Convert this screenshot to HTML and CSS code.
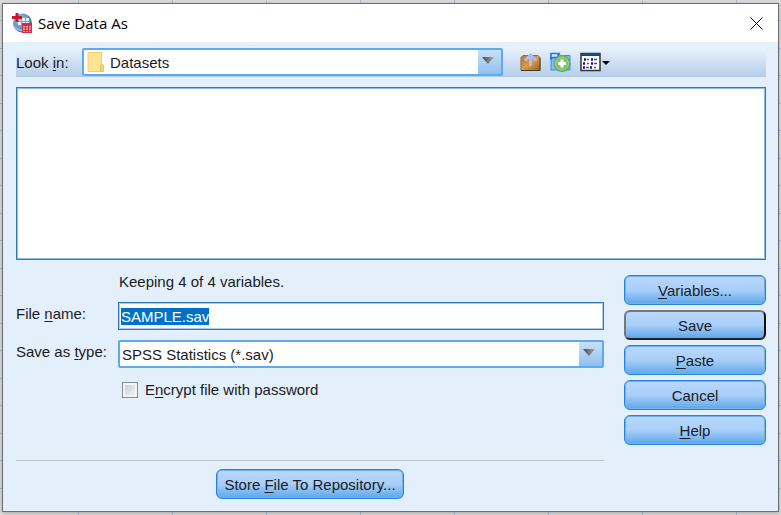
FILE: index.html
```html
<!DOCTYPE html>
<html lang="en">
<head>
<meta charset="utf-8">
<title>Save Data As</title>
<link rel="stylesheet" href="styles.css">
</head>
<body>
<main class="dialog">
  <header class="titlebar">
    <svg class="app-icon" width="20" height="20" viewBox="0 0 20 20" aria-hidden="true">
      <defs><radialGradient id="globe" cx=".4" cy=".35" r=".7"><stop offset="0" stop-color="#a9cdea"/><stop offset="1" stop-color="#2f6da9"/></radialGradient></defs>
      <circle cx="10.500" cy="10" r="9.500" fill="url(#globe)"/>
      <path d="M6 5h11v7H6z" fill="#e4eff9"/>
      <path d="M6 8.500h11M9.500 5v7M13.500 5v7" stroke="#7ba8d2"/>
      <path d="M2 13q4 5 9 4" stroke="#8fbce0" stroke-width="2" fill="none"/>
      <path d="M0 4.500h10M5 0v9" stroke="#d3122c" stroke-width="3"/>
      <path d="M10 10h10v10H10z" fill="#d52c42"/>
      <path d="M11 13h2v1.500h-2zM14 13h2v1.500h-2zM17 13h2v1.500h-2zM11 15.500h2V17h-2zM14 15.500h2V17h-2zM17 15.500h2V17h-2zM11 18h2v1h-2zM14 18h2v1h-2zM17 18h2v1h-2z" fill="#f0a9b3"/>
    </svg>
    <h1>Save Data As</h1>
    <button class="close" type="button" aria-label="Close">
      <svg width="13" height="13" viewBox="0 0 13 13"><path d="M.5.5l12 12M12.500.5l-12 12" stroke="#000"/></svg>
    </button>
  </header>
  <form class="content">
    <div class="toolbar">
      <label for="folder">Look <u>i</u>n:</label>
      <div class="combo folder-combo">
        <select id="folder"><option>Datasets</option></select>
        <svg class="folder" width="18" height="20" viewBox="0 0 18 20" aria-hidden="true"><path d="M1 .5h13.500v11.500l2 1v6.500H1z" fill="#ffe493" stroke="#f2cf66"/><path d="M13.500 19.500v-6l1.500-1.500 1.500 1.500v6z" fill="#f7d56d" stroke="#e9c45b"/></svg>
        <svg class="arrow" width="12" height="7" viewBox="0 0 12 7" aria-hidden="true"><path d="M0 0h12L6 7z" fill="url(#arrow)"/><defs><linearGradient id="arrow"><stop offset="0" stop-color="#444"/><stop offset="1" stop-color="#aaa"/></linearGradient></defs></svg>
      </div>
      <div class="tools">
        <button type="button" aria-label="Up one level">
          <svg width="21" height="20" viewBox="0 0 21 20"><defs><linearGradient id="box" x2="1" y2="1"><stop offset="0" stop-color="#b9762c"/><stop offset=".5" stop-color="#d99b4c"/><stop offset="1" stop-color="#9b5f20"/></linearGradient></defs><path d="M1 5.500l2-2h15l2 2v13H1z" fill="url(#box)" stroke="#8b6a45"/><path d="M1 18.500h19V6" stroke="#4b3c2b" fill="none"/><path d="M10.500 14V4M5 8.500l5.500-5.500L16 8.500" stroke="#a9bdf5" stroke-width="3" fill="none"/></svg>
        </button>
        <button type="button" aria-label="New folder">
          <svg width="21" height="20" viewBox="0 0 21 20"><path d="M1 18V1.500h8l1.500 2H20V18z" fill="#84bdf2" stroke="#398cf0"/><path d="M1 7V1.500h8l-2 4H3z" fill="#d7eaff" stroke="#226ef0" stroke-width="1.500"/><circle cx="12" cy="11.500" r="8" fill="#64b64e" stroke="#5fa95c"/><circle cx="12" cy="11.500" r="6.500" fill="#7cc465" stroke="#a9d99b"/><path d="M8 11.500h8M12 7.500v8" stroke="#fff" stroke-width="3"/></svg>
        </button>
        <button type="button" aria-label="View">
          <svg width="30" height="20" viewBox="0 0 30 20"><path d="M1 1.500h19v17H1z" fill="#fff" stroke="#333" stroke-width="1.500"/><path d="M1 1h19v3H1z" fill="#075187"/><path d="M4 7.500h2M11 7.500h2M3 11.500h2M11 11.500h2M3 15.500h2M10 15.500h2" stroke="#1c168c" stroke-width="2.500"/><path d="M7 7.500h2M14 7.500h3M7 11.500h2M14 11.500h3M6 15.500h3M14 15.500h2" stroke="#555" stroke-width="1.500"/><path d="M22 9h8l-4 4z" fill="#000"/></svg>
        </button>
      </div>
    </div>
    <div class="files" role="listbox" aria-label="Files"></div>
    <div class="lower">
      <section class="fields">
        <p class="summary">Keeping 4 of 4 variables.</p>
        <label for="name">File <u>n</u>ame:</label>
        <input id="name" class="name" type="text" value="SAMPLE.sav" autocomplete="off" spellcheck="false">
        <label for="type">Save as <u>t</u>ype:</label>
        <div class="combo">
          <select id="type"><option>SPSS Statistics (*.sav)</option></select>
          <svg class="arrow" width="12" height="7" viewBox="0 0 12 7" aria-hidden="true"><path d="M0 0h12L6 7z" fill="url(#arrow)"/></svg>
        </div>
        <label class="encrypt"><input type="checkbox"><span>E<u>n</u>crypt file with password</span></label>
      </section>
      <div class="actions">
        <button class="btn" type="button"><span><u>V</u>ariables...</span></button>
        <button class="btn default" type="submit">Save</button>
        <button class="btn" type="button"><span><u>P</u>aste</span></button>
        <button class="btn" type="button">Cancel</button>
        <button class="btn" type="button"><span><u>H</u>elp</span></button>
      </div>
      <footer class="repository">
        <button class="btn" type="button"><span>Store <u>F</u>ile To Repository...</span></button>
      </footer>
    </div>
  </form>
</main>
<script src="script.js"></script>
</body>
</html>
```
FILE: styles.css
```css
* { box-sizing: border-box; }

body {
  margin: 0;
  padding: 3px 2px;
  min-height: 100vh;
  color: #1b1b24;
  font: 15px/20px "Liberation Sans", Arial, sans-serif;
  background:
    repeating-linear-gradient(90deg, transparent 0 78px, #a9c0d5 78px 79px, transparent 79px 94px),
    repeating-linear-gradient(transparent 0 20px, #a9c0d5 20px 21px, transparent 21px 48px, #a9c0d5 48px 49px, transparent 49px 55px),
    #dcdcdd;
}

.dialog {
  border: 1px solid #6b6e72;
  background: #e3effb;
  box-shadow: 0 1px 4px rgba(0, 0, 0, .25);
}

.titlebar {
  display: flex;
  align-items: center;
  gap: 6px;
  height: 38px;
  padding: 0 9px;
  background: #fff;
}

h1 {
  flex: 1;
  margin: 0;
  color: #000;
  font: 15px/20px "Open Sans", sans-serif;
}

button { font: inherit; color: inherit; }

.close, .tools button {
  display: flex;
  padding: 0;
  border: 0;
  background: none;
}

.close { padding: 6px; }

.content { padding: 5px 12px 12px 13px; }

.toolbar {
  display: flex;
  align-items: center;
  height: 30px;
  background: linear-gradient(#eaf3fd, #b4cce8);
}

.toolbar label { width: 66px; padding-top: 2px; white-space: nowrap; }

u { text-underline-offset: 2px; text-decoration-thickness: 1px; }

.combo { position: relative; }
.folder-combo { flex: 0 1 421px; }

select {
  display: block;
  appearance: none;
  width: 100%;
  height: 28px;
  padding: 2px 28px 0 2px;
  border: 2px solid #5daaf0;
  border-radius: 2px;
  color: inherit;
  font: inherit;
  background: linear-gradient(#c9e0fa, #8fc0f0) right / 23px 100% no-repeat #fff;
}

.folder-combo select { padding-left: 26px; }

.arrow, .folder { position: absolute; pointer-events: none; }
.arrow { right: 9px; top: 9px; }
.folder { left: 5px; top: 4px; }

.tools { display: flex; gap: 9px; margin-left: 17px; }

.files {
  height: 173px;
  margin-top: 10px;
  border: 1px solid #2f78be;
  background: #fff;
  box-shadow: inset 0 0 0 1px #8fbce6;
}

.lower {
  display: grid;
  grid-template-columns: 1fr 142px;
  column-gap: 20px;
  padding-top: 12px;
}

.fields {
  display: grid;
  grid-template-columns: 102px 1fr;
  align-content: start;
  row-gap: 10px;
}

.fields > label { line-height: 24px; white-space: nowrap; }
.summary { grid-column: 2; margin: 0; padding-left: 1px; }

.name {
  width: 100%;
  height: 28px;
  padding: 0 2px;
  border: 1px solid #2f78be;
  outline: 0;
  color: inherit;
  font: inherit;
  background: #fff;
  box-shadow: inset 0 0 0 1px #a9cbea;
}

.name::selection { color: #fff; background: #0072c6; }

.fields .encrypt {
  grid-column: 2;
  display: flex;
  align-items: center;
  gap: 7px;
  padding-left: 4px;
}

.encrypt input {
  appearance: none;
  width: 16px;
  height: 16px;
  margin: 0;
  border: 1px solid #858b92;
  background: linear-gradient(135deg, #c6c9cc, #f7f7f7);
  box-shadow: inset 0 0 0 2px #f4f4f4;
}

.actions {
  display: grid;
  gap: 5px;
  align-content: start;
  padding-top: 3px;
}

.btn {
  height: 30px;
  padding: 1px 7px 0;
  border: 1px solid #2583dd;
  border-radius: 6px;
  background: linear-gradient(#bad7fc, #a9cff8 50%, #5da7ea);
  box-shadow: inset 0 0 0 1px #6fb1f0;
}

.btn.default {
  border: 2px solid;
  border-color: #777 #111 #222 #777;
  box-shadow: none;
}

.repository {
  display: flex;
  justify-content: center;
  margin-top: 15px;
  padding-top: 8px;
  border-top: 1px solid #bfc3c3;
}
```
FILE: script.js
```js
const nameField = document.getElementById("name");
nameField.focus();
nameField.select();
```
